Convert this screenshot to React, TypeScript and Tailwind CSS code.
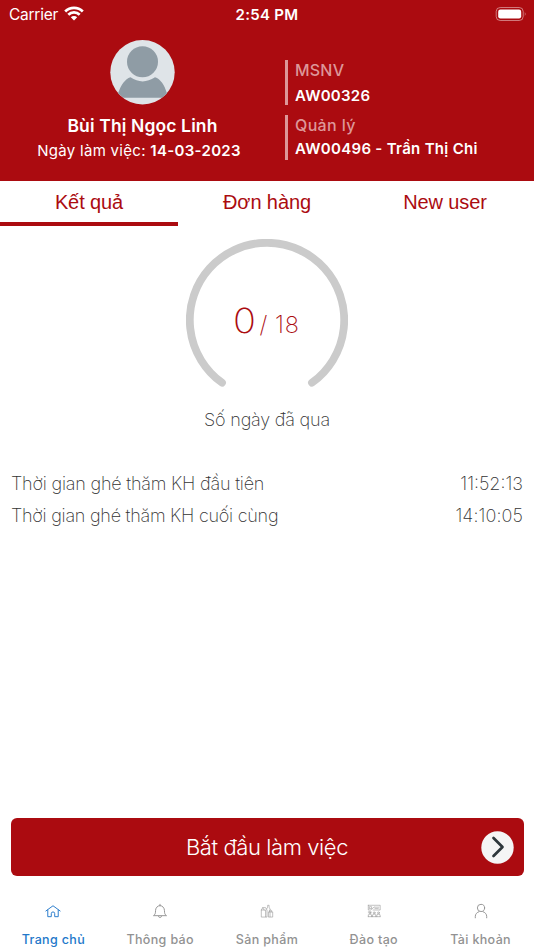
import type { ReactNode } from 'react';

const inter = "font-['Inter','Liberation_Sans',sans-serif]";

function StatusBar() {
  return (
    <div className="grid h-7 grid-cols-[1fr_auto_1fr] items-center pr-[7px] pl-[9px]">
      <div className="flex items-center gap-[6px]">
        <span className="pt-px text-[15.5px] leading-7 tracking-[-0.25px]">Carrier</span>
        <svg className="-mt-[2px]" width="20" height="15" viewBox="0 0 20 15" fill="none" stroke="white" strokeWidth="2.7">
          <path d="M1.2 5.5a12.5 12.5 0 0 1 17.6 0" />
          <path d="M4.3 8.8a8 8 0 0 1 11.4 0" />
          <path d="M10 14.5 6.8 11.2a4.6 4.6 0 0 1 6.4 0Z" fill="white" stroke="none" />
        </svg>
      </div>
      <span className="pr-[2px] text-center text-[15px] leading-7 font-semibold tracking-[0.3px]">2:54 PM</span>
      <svg className="-mt-[2px] ml-auto" width="32" height="16" viewBox="0 0 32 16">
        <rect x="1.2" y="1.5" width="27" height="13" rx="4" fill="none" stroke="white" strokeOpacity=".45" />
        <rect x="3.2" y="3.5" width="23" height="9" rx="2.2" fill="white" />
        <path d="M29.8 5.8q1.7 2.2 0 4.4Z" fill="white" fillOpacity=".5" />
      </svg>
    </div>
  );
}

function Avatar() {
  return (
    <svg width="65" height="65" viewBox="0 0 65 65">
      <circle cx="32.5" cy="32.3" r="32.2" fill="#dfe4e8" />
      <path d="M8 53.5C11 45 15 39 20.5 37.3Q32.5 45.5 45 37.3C50.5 39 54.5 45 57 53.5L52 57.8H13.5Z" fill="#8f9ca5" />
      <circle cx="32.5" cy="21.8" r="15.5" fill="#8f9ca5" />
    </svg>
  );
}

function Gauge() {
  return (
    <div className="grid h-[162px] w-[162px] place-items-center">
      <svg className="col-start-1 row-start-1" width="162" height="162" viewBox="0 0 162 162">
        <path d="M36 143.7A77.2 77.2 0 1 1 126 143.7" fill="none" stroke="#cbcbcb" strokeWidth="7.8" strokeLinecap="round" />
      </svg>
      <div className="col-start-1 row-start-1 flex items-baseline pt-[4px] text-[#ab0b10]">
        <span className="inline-block origin-right scale-x-110 text-[34.5px] leading-10 font-extralight">0</span>
        <span className="ml-[4px] text-[23.5px] font-extralight tracking-[0.6px] whitespace-pre">/ 18</span>
      </div>
    </div>
  );
}

function NavItem({ label, active, children }: { label: string; active?: boolean; children: ReactNode }) {
  return (
    <div className={`flex flex-1 flex-col items-center ${active ? 'text-[#2378ca]' : 'text-[#929292]'}`}>
      <svg width="20" height="20" viewBox="0 0 20 20" fill="none" stroke="currentColor" strokeLinecap="round" strokeLinejoin="round">
        {children}
      </svg>
      <span className="mt-[10px] text-[12.5px] leading-5 font-medium tracking-[0.35px] whitespace-nowrap">{label}</span>
    </div>
  );
}

export default function App() {
  return (
    <div className={`flex h-[950px] w-[534px] flex-col overflow-hidden bg-white ${inter}`}>
      <header className="h-[181px] bg-[#ab0b10] text-white">
        <StatusBar />
        <div className="flex">
          <div className="flex w-[285px] flex-col items-center pt-3">
            <Avatar />
            <h1 className="mt-[9px] text-[17.5px] leading-6 font-semibold tracking-[0.13px]">Bùi Thị Ngọc Linh</h1>
            <p className="mt-px mr-[7px] text-[15px] leading-6 tracking-[0.3px]">
              Ngày làm việc: <span className="font-semibold">14-03-2023</span>
            </p>
          </div>
          <div className="flex flex-col gap-[10px] pt-8">
            <div className="h-[45px] border-l-[3px] border-[#dd9799] pl-[7px]">
              <p className="text-[16px] leading-5 font-medium tracking-[0.2px] text-[#dd9799]">MSNV</p>
              <p className="mt-[6px] text-[15px] leading-5 font-semibold tracking-[0.25px]">AW00326</p>
            </div>
            <div className="h-[45px] border-l-[3px] border-[#dd9799] pl-[7px]">
              <p className="text-[16px] leading-5 font-medium tracking-[0.35px] text-[#dd9799]">Quản lý</p>
              <p className="mt-[4px] text-[15px] leading-5 font-semibold tracking-[0.3px]">AW00496 - Trần Thị Chi</p>
            </div>
          </div>
        </div>
      </header>

      <nav className="grid h-[45px] grid-cols-3 text-center font-['Liberation_Sans',Arial,sans-serif] text-[20px] leading-10 tracking-[-0.1px] text-[#ab0b10]">
        <span className="border-b-4 border-[#ab0b10] pt-px">Kết quả</span>
        <span className="pt-px">Đơn hàng</span>
        <span className="pt-px">New user</span>
      </nav>

      <main className="flex flex-1 flex-col items-center pt-[13px] text-[#333]">
        <Gauge />
        <p className="mt-[7px] text-[18px] leading-6 font-[250] tracking-[-0.2px]">Số ngày đã qua</p>
        <dl className="mt-[36px] w-full px-[11px] text-[18px] leading-8 font-[250]">
          <div className="flex justify-between">
            <dt className="tracking-[-0.2px]">Thời gian ghé thăm KH đầu tiên</dt>
            <dd>11:52:13</dd>
          </div>
          <div className="flex justify-between">
            <dt className="tracking-[-0.25px]">Thời gian ghé thăm KH cuối cùng</dt>
            <dd className="tracking-[0.1px]">14:10:05</dd>
          </div>
        </dl>
      </main>

      <button className="mx-[10.5px] grid h-[58px] shrink-0 grid-cols-[1fr_auto_1fr] items-center rounded-[6px] bg-[#ab0b10] pr-[10px] text-white">
        <span className="col-start-2 pl-[10px] text-[22px] leading-8 font-[350] tracking-[-0.4px]">Bắt đầu làm việc</span>
        <svg className="ml-auto" width="33" height="33" viewBox="0 0 33 33" fill="none">
          <circle cx="16.5" cy="16.5" r="16.2" fill="#f5f5f5" />
          <path d="m12.500 7 9 9-9 9" stroke="#2e373b" strokeWidth="2.7" strokeLinecap="round" strokeLinejoin="round" />
        </svg>
      </button>

      <footer className="mt-[25px] flex h-[49px] shrink-0">
        <NavItem label="Trang chủ" active>
          <path d="M2.5 10.500 10 5l7.500 5.500M4.500 9.500V16.500h3.700v-3.200a1.800 1.800 0 0 1 3.600 0v3.200h3.700V9.500" />
        </NavItem>
        <NavItem label="Thông báo">
          <path d="M10 3.500v1.500M3.500 15.200c1.500-1 1.800-2.500 1.800-5a4.700 5.300 0 0 1 9.400 0c0 2.500.3 4 1.800 5ZM8.300 16.500q1.700 2.200 3.400 0" />
        </NavItem>
        <NavItem label="Sản phẩm">
          <path strokeWidth=".6" d="M4 16.500V9.500l1.500-2.500h3L10 9.500v7ZM4 9.500h4.500v7M5.500 7 7 9.500M9.500 8.500l1.200-2V4.500h1.500v2l1 2v8M11.500 16.500v-5h4.500v5ZM12.500 11.500V10q1.200-1 2.400 0v1.500" />
        </NavItem>
        <NavItem label="Đào tạo">
          <path strokeWidth=".6" d="M4 4.500h12.500v5H9M4 4.500v5h2.500L10 6.500M5.500 6h2v2h-2ZM10.500 6.500H15M11 8h3.500M4 16.500v-2q1.700-1.500 3.400 0v2M8.500 16.500v-2q1.700-1.500 3.400 0v2M13 16.500v-2q1.700-1.500 3.400 0v2M4 16.500h12.500M4 11.500h3" />
          <g strokeWidth=".6">
            <circle cx="5.7" cy="12.5" r="1" />
            <circle cx="10.2" cy="12.5" r="1" />
            <circle cx="14.7" cy="12.5" r="1" />
          </g>
        </NavItem>
        <NavItem label="Tài khoản">
          <circle cx="10" cy="7.300" r="3.800" />
          <path d="M4 17.700v-1.500c0-2.500 1.800-4.300 4-5M16 17.700v-1.500c0-2.500-1.800-4.300-4-5" />
        </NavItem>
      </footer>
    </div>
  );
}
